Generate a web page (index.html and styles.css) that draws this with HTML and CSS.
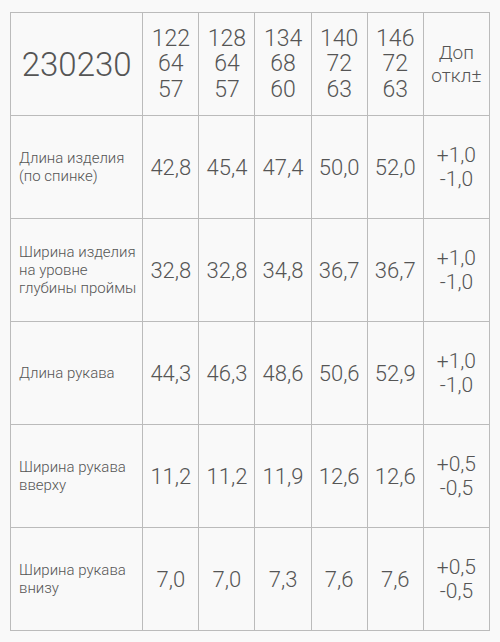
FILE: index.html
```html
<!DOCTYPE html>
<html lang="ru">
<head>
<meta charset="utf-8">
<link rel="stylesheet" href="styles.css">
</head>
<body>
<table class="sizes">
  <colgroup>
    <col class="c-label">
    <col class="c-size"><col class="c-size"><col class="c-size"><col class="c-size"><col class="c-size">
    <col class="c-tol">
  </colgroup>
  <tr class="head">
    <td class="model">230230</td>
    <td class="sz">122<br>64<br>57</td>
    <td class="sz">128<br>64<br>57</td>
    <td class="sz">134<br>68<br>60</td>
    <td class="sz">140<br>72<br>63</td>
    <td class="sz">146<br>72<br>63</td>
    <td class="dop">Доп<br>откл±</td>
  </tr>
  <tr>
    <td class="label">Длина изделия<br>(по спинке)</td>
    <td class="val">42,8</td><td class="val">45,4</td><td class="val">47,4</td><td class="val">50,0</td><td class="val">52,0</td>
    <td class="tol">+1,0<br>-1,0</td>
  </tr>
  <tr>
    <td class="label">Ширина изделия<br>на уровне<br>глубины проймы</td>
    <td class="val">32,8</td><td class="val">32,8</td><td class="val">34,8</td><td class="val">36,7</td><td class="val">36,7</td>
    <td class="tol">+1,0<br>-1,0</td>
  </tr>
  <tr>
    <td class="label">Длина рукава</td>
    <td class="val">44,3</td><td class="val">46,3</td><td class="val">48,6</td><td class="val">50,6</td><td class="val">52,9</td>
    <td class="tol">+1,0<br>-1,0</td>
  </tr>
  <tr>
    <td class="label">Ширина рукава<br>вверху</td>
    <td class="val">11,2</td><td class="val">11,2</td><td class="val">11,9</td><td class="val">12,6</td><td class="val">12,6</td>
    <td class="tol">+0,5<br>-0,5</td>
  </tr>
  <tr>
    <td class="label">Ширина рукава<br>внизу</td>
    <td class="val">7,0</td><td class="val">7,0</td><td class="val">7,3</td><td class="val">7,6</td><td class="val">7,6</td>
    <td class="tol">+0,5<br>-0,5</td>
  </tr>
</table>
</body>
</html>
```
FILE: styles.css
```css
html, body {
  margin: 0;
  background: #f9f9f9;
}
body {
  padding: 12px 10px;
  font-family: Roboto, "Liberation Sans", Arial, sans-serif;
  font-weight: 300;
  color: #555;
}
.sizes {
  border-collapse: collapse;
  table-layout: fixed;
  width: 480px;
}
.c-label { width: 132px; }
.c-size { width: 56px; }
.c-tol { width: 66px; }
.sizes td {
  border: 1px solid #bbb;
  padding: 0;
  text-align: center;
  vertical-align: middle;
}
.sizes tr { height: 103px; }
.model {
  font-size: 33px;
}
.sz {
  font-size: 23px;
  line-height: 25.5px;
}
.dop {
  font-size: 19px;
  line-height: 23px;
}
.label {
  text-align: left !important;
  padding-left: 8px !important;
  font-size: 15px;
  line-height: 18px;
}
.val {
  font-size: 22px;
}
.tol {
  font-size: 21px;
  line-height: 24px;
}
```
